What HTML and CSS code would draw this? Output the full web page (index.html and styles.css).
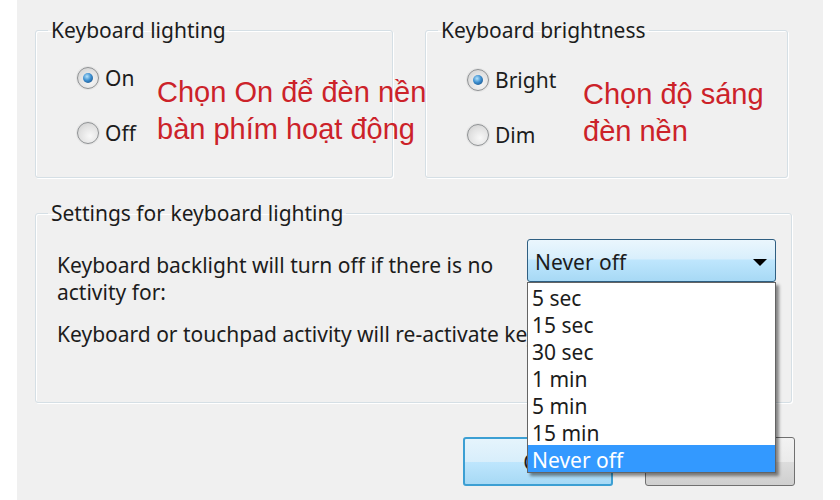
FILE: index.html
```html
<!DOCTYPE html>
<html lang="vi">
<head>
    <meta charset="UTF-8">
    <title>Keyboard lighting</title>
    <link rel="stylesheet" href="styles.css">
</head>
<body>

    <div class="window">

        <!-- Top row: lighting + brightness -->
        <div class="top-row">
            <fieldset class="group group-lighting">
                <legend>Keyboard lighting</legend>
                <div class="group-body">
                    <div class="options options-short">
                        <label class="option"><span class="radio checked"></span>On</label>
                        <label class="option"><span class="radio"></span>Off</label>
                    </div>
                    <p class="note">Chọn On để đèn nền<br>bàn phím hoạt động</p>
                </div>
            </fieldset>

            <fieldset class="group group-brightness">
                <legend>Keyboard brightness</legend>
                <div class="group-body">
                    <div class="options options-long">
                        <label class="option"><span class="radio checked"></span>Bright</label>
                        <label class="option"><span class="radio"></span>Dim</label>
                    </div>
                    <p class="note">Chọn độ sáng<br>đèn nền</p>
                </div>
            </fieldset>
        </div>

        <!-- Timeout settings -->
        <fieldset class="group group-settings">
            <legend>Settings for keyboard lighting</legend>
            <div class="settings-row">
                <p class="desc">Keyboard backlight will turn off if there is no activity for:</p>
                <div class="combo">
                    <div class="combo-box">
                        <span>Never off</span>
                        <span class="arrow"></span>
                    </div>
                    <ul class="combo-list">
                        <li>5 sec</li>
                        <li>15 sec</li>
                        <li>30 sec</li>
                        <li>1 min</li>
                        <li>5 min</li>
                        <li>15 min</li>
                        <li class="selected">Never off</li>
                    </ul>
                </div>
            </div>
            <p class="desc-2">Keyboard or touchpad activity will re-activate keyboard backlight.</p>
        </fieldset>

        <div class="buttons">
            <button class="btn btn-ok">OK</button>
            <button class="btn">Cancel</button>
        </div>

    </div>

</body>
</html>
```

FILE: styles.css
```css
body {
    margin: 0;
    padding: 0;
    background-color: #fff;
    font-family: "Noto Sans", "Open Sans", sans-serif;
    font-size: 21px;
    color: #1c1c1c;
}
.window {
    margin-left: 17px;
    width: 806px;
    height: 500px;
    box-sizing: border-box;
    padding: 19px 0 0 18px;
    background-color: #f0f0f0;
    overflow: hidden;
}

/* Group boxes */
.group {
    box-sizing: border-box;
    margin: 0;
    padding: 0;
    min-width: 0;
    border: 1px solid #d5dfe5;
    border-radius: 3px;
    box-shadow: inset 1px 1px 0 #fff, 1px 1px 0 #fff;
}
.group legend {
    margin-left: 12px;
    padding: 0 3px;
    line-height: 22px;
}
.top-row {
    display: flex;
    gap: 32px;
}
.group-lighting {
    width: 358px;
    height: 159px;
}
.group-brightness {
    width: 363px;
    height: 159px;
}
.group-body {
    display: flex;
    padding: 26px 0 0 41px;
}
.group-brightness .group-body {
    padding-top: 28px;
}

/* Radio buttons */
.options {
    flex-shrink: 0;
    display: flex;
    flex-direction: column;
    gap: 33px;
}
.options-short {
    width: 80px;
}
.options-long {
    width: 116px;
}
.option {
    display: flex;
    align-items: center;
    gap: 6px;
    height: 22px;
    line-height: 22px;
}
.radio {
    width: 20px;
    height: 20px;
    border: 1px solid #8f9294;
    border-radius: 50%;
    background: radial-gradient(circle at 60% 65%, #f8f8f8 0, #e2e2e2 55%, #c9c9c9 100%);
    box-shadow: 0 0 0 1px #e4e4e4;
    display: flex;
    align-items: center;
    justify-content: center;
}
.radio.checked::after {
    content: "";
    width: 10px;
    height: 10px;
    border-radius: 50%;
    background: radial-gradient(circle at 40% 35%, #b6e3fb 0, #3d8fd0 45%, #0f3f73 100%);
}

/* Red annotation */
.note {
    margin: 7px 0 0;
    font-family: "Liberation Sans", Arial, sans-serif;
    font-size: 29px;
    line-height: 37px;
    color: #cc2229;
    white-space: nowrap;
}

/* Settings group */
.group-settings {
    width: 757px;
    height: 201px;
    margin-top: 24px;
}
.settings-row {
    display: flex;
    align-items: flex-start;
    padding: 15px 0 0 21px;
}
.desc {
    width: 449px;
    margin: 13px 0 0;
    line-height: 27px;
}
.desc-2 {
    margin: 15px 0 0 21px;
    line-height: 27px;
    white-space: nowrap;
}

/* Combo box with open list */
.combo {
    position: relative;
    width: 249px;
    margin-left: 21px;
}
.combo-box {
    box-sizing: border-box;
    height: 43px;
    display: flex;
    align-items: center;
    justify-content: space-between;
    padding: 3px 8px 0 7px;
    border: 1px solid #2f5f82;
    border-radius: 3px;
    background: linear-gradient(#eaf6fd 0%, #d9effc 45%, #bee6fd 50%, #a7d9f5 100%);
}
.arrow {
    width: 0;
    height: 0;
    border-left: 7px solid transparent;
    border-right: 7px solid transparent;
    border-top: 7px solid #000;
}
.combo-list {
    position: absolute;
    top: 100%;
    left: 0;
    right: 0;
    z-index: 10;
    margin: 0;
    padding: 0;
    list-style: none;
    background-color: #fff;
    border: 1px solid #646464;
    box-shadow: 3px 3px 3px rgba(0, 0, 0, 0.45);
}
.combo-list li {
    height: 27px;
    padding: 3px 0 0 4px;
    box-sizing: border-box;
    line-height: 24px;
}
.combo-list li.selected {
    background-color: #3399ff;
    color: #fff;
}

/* Dialog buttons */
.buttons {
    display: flex;
    justify-content: flex-end;
    gap: 32px;
    margin: 34px 28px 0 0;
}
.btn {
    width: 150px;
    height: 49px;
    font-family: inherit;
    font-size: 21px;
    color: #1c1c1c;
    border: 1px solid #707070;
    border-radius: 3px;
    background: linear-gradient(#f2f2f2 0%, #ebebeb 50%, #dddddd 51%, #cfcfcf 100%);
}
.btn-ok {
    border: 2px solid #3c9fd3;
    background: linear-gradient(#e5f4fc 0%, #d8eefb 50%, #bee6fd 51%, #a7d9f5 100%);
}
```
